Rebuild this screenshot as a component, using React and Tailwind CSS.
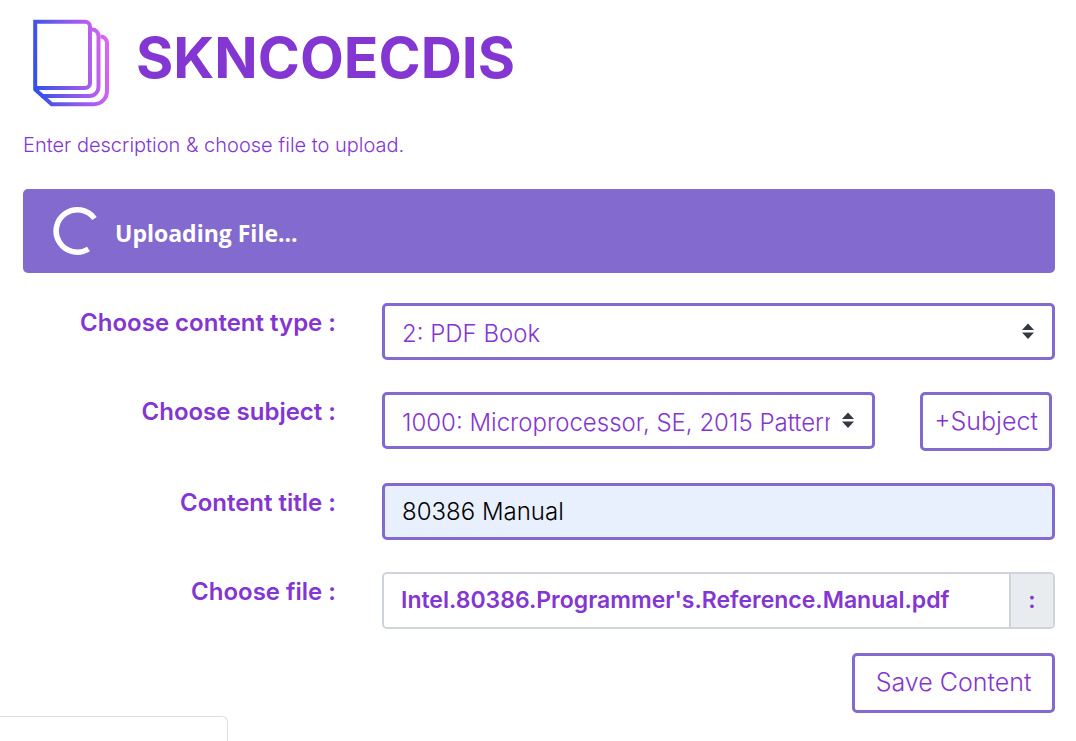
import React from "react";

const fieldBox =
  "h-[57px] w-full rounded-[5px] border-3 border-[#836acf] pl-[17px] text-[24px] font-light outline-none";

function Logo() {
  return (
    <svg className="h-[88px] w-[78px] shrink-0" viewBox="0 0 78 88" fill="none" aria-hidden="true">
      <defs>
        <linearGradient id="pages" gradientUnits="userSpaceOnUse" x1="1" y1="50" x2="77" y2="40">
          <stop offset="0" stopColor="#3350ea" />
          <stop offset="0.35" stopColor="#6e58ea" />
          <stop offset="0.75" stopColor="#b05eee" />
          <stop offset="1" stopColor="#dd64f2" />
        </linearGradient>
      </defs>
      <g stroke="url(#pages)" strokeWidth="4">
        <path d="M3.2 2.800H53a5 5 0 0 1 5 5V64a5 5 0 0 1-5 5H3.2Z" />
        <path d="M2.700 70 19.700 85.200H62a13 13 0 0 0 13-13V24a6.500 6.500 0 0 0-6.500-6.500" />
        <path d="M9 77H57.500a9 9 0 0 0 9-9V17a6.500 6.500 0 0 0-6.500-6.500" />
      </g>
    </svg>
  );
}

function Select({ id, children }) {
  return (
    <div className="relative min-w-0 flex-1">
      <select
        id={id}
        className={`${fieldBox} appearance-none bg-white pr-[42px] pt-1 text-[#8336d1]`}
      >
        {children}
      </select>
      <svg
        className="pointer-events-none absolute right-[21px] top-5 h-4 w-3"
        viewBox="0 0 12 16"
        fill="#343a40"
        aria-hidden="true"
      >
        <path d="M6 0.500 12 7H0ZM6 16 0 9.500H12Z" />
      </svg>
    </div>
  );
}

function Row({ id, label, children }) {
  return (
    <div className="grid grid-cols-[1fr_2.15fr] items-start gap-[46px]">
      <label htmlFor={id} className="pt-1 text-right text-[24px] font-semibold leading-8">
        {label}
      </label>
      <div className="flex min-w-0 items-start">{children}</div>
    </div>
  );
}

export default function App() {
  return (
    <div className="min-h-screen overflow-x-hidden bg-white font-['Inter',sans-serif] text-[#8336d1]">
      <main className="pl-[23px] pr-[21px] pt-[19px]">
        <header className="flex items-start gap-[26px] pl-[9px]">
          <Logo />
          <h1 className="text-[57px] font-bold leading-[78px]">SKNCOECDIS</h1>
        </header>

        <p className="mt-6 text-[20px] font-light leading-7">
          Enter description &amp; choose file to upload.
        </p>

        <div
          role="status"
          className="mt-[30px] flex h-[84px] items-center gap-4 rounded-[5px] bg-[#836acf] pl-[28px] text-white"
        >
          <svg className="h-[50px] w-[48px]" viewBox="0 0 48 50" fill="none" aria-hidden="true">
            <path d="M43.500 12.500A21.200 21.200 0 1 0 37.500 43" stroke="#fff" strokeWidth="5.500" />
          </svg>
          <span className="pt-1 font-['Open_Sans',sans-serif] text-[23px] font-bold leading-8">
            Uploading File...
          </span>
        </div>

        <form className="mt-[30px] flex flex-col gap-8" onSubmit={(e) => e.preventDefault()}>
          <Row id="type" label="Choose content type :">
            <Select id="type">
              <option>2: PDF Book</option>
            </Select>
          </Row>

          <Row id="subject" label="Choose subject :">
            <Select id="subject">
              <option>1000: Microprocessor, SE, 2015 Pattern</option>
            </Select>
            <button
              type="button"
              className="ml-[45px] mr-[3px] h-[59px] w-[132px] shrink-0 rounded-[5px] border-3 border-[#836acf] text-[25px] font-light"
            >
              +Subject
            </button>
          </Row>

          <Row id="title" label="Content title :">
            <input
              id="title"
              type="text"
              defaultValue="80386 Manual"
              className={`${fieldBox} bg-[#e8effd] pr-4 text-black`}
            />
          </Row>

          <Row id="file" label="Choose file :">
            <input id="file" type="file" className="peer sr-only" />
            <label
              htmlFor="file"
              className="flex h-[57px] w-full cursor-pointer overflow-hidden rounded-[5px] border-2 border-[#ced4da] text-[23px] font-semibold"
            >
              <span className="flex min-w-0 flex-1 items-center truncate pl-[17px]">
                Intel.80386.Programmer's.Reference.Manual.pdf
              </span>
              <span className="flex w-[44px] shrink-0 items-center justify-center border-l-2 border-[#ced4da] bg-[#e9ecef]">
                :
              </span>
            </label>
          </Row>

          <button
            type="submit"
            className="-mt-2 h-[60px] w-[203px] self-end rounded-[5px] border-3 border-[#836acf] text-[25px] font-light"
          >
            Save Content
          </button>
        </form>
      </main>
      <div className="mt-[3px] h-[25px] w-[228px] rounded-tr-md border-r border-t border-[#dedede]" />
    </div>
  );
}
